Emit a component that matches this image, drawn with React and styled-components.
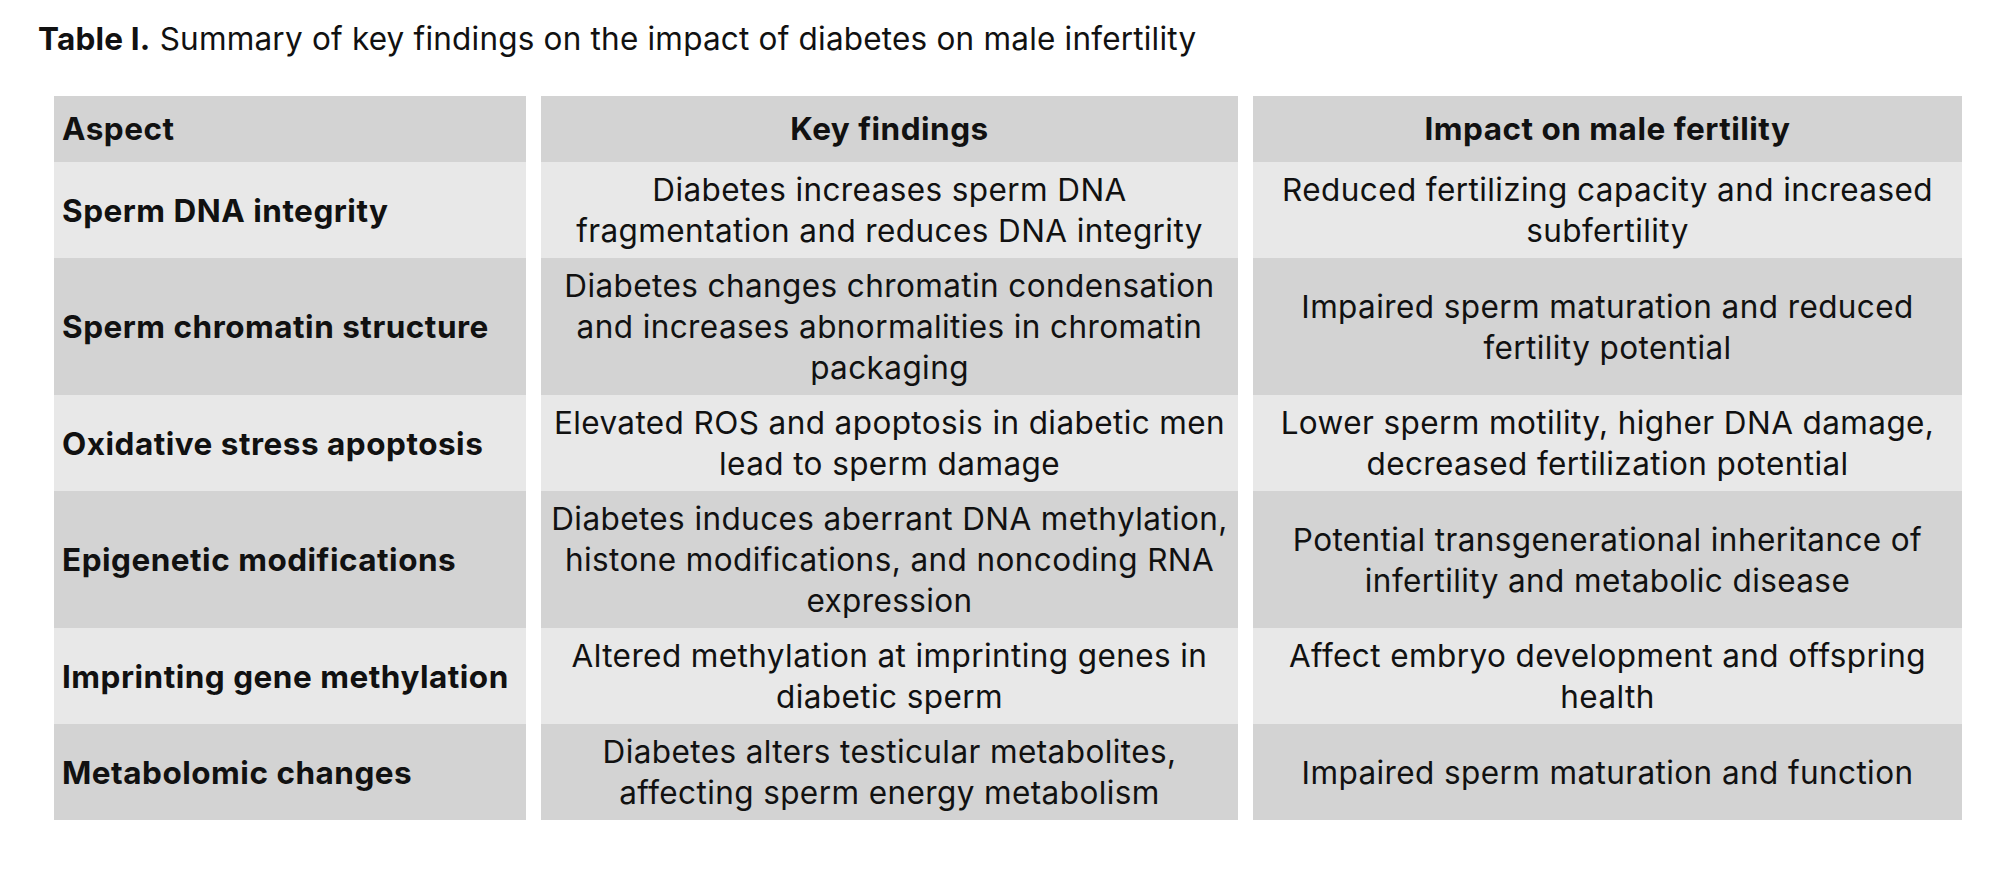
import React from 'react';
import styled, { createGlobalStyle } from 'styled-components';

const GlobalStyle = createGlobalStyle`
  html, body {
    margin: 0;
    padding: 0;
    background: #ffffff;
  }
  body {
    font-family: Inter, Lato, "Liberation Sans", sans-serif;
    color: #111111;
  }
`;

const Page = styled.div`
  width: 2000px;
  height: 879px;
  padding: 21px 0 0 38px;
  box-sizing: border-box;
`;

const Caption = styled.div`
  font-size: 31.5px;
  line-height: 36px;
  letter-spacing: 0.2px;
  color: #111111;
  margin-bottom: 39px;

  b {
    font-weight: 700;
  }
`;

const Table = styled.div`
  display: grid;
  grid-template-columns: 472px 697px 709px;
  column-gap: 15px;
  margin-left: 16px;
`;

const Cell = styled.div`
  display: flex;
  align-items: center;
  justify-content: ${({ $left }) => ($left ? 'flex-start' : 'center')};
  text-align: ${({ $left }) => ($left ? 'left' : 'center')};
  background: ${({ $shade }) => ($shade ? '#d3d3d3' : '#e8e8e8')};
  padding: ${({ $head }) => ($head ? '12px 8px 13px' : '7px 8px')};
  font-size: 31.5px;
  line-height: 41px;
  letter-spacing: ${({ $bold }) => ($bold ? '0.5px' : '0.4px')};
  font-weight: ${({ $bold }) => ($bold ? 700 : 400)};
  box-sizing: border-box;
`;

const rows = [
  [
    'Sperm DNA integrity',
    'Diabetes increases sperm DNA fragmentation and reduces DNA integrity',
    'Reduced fertilizing capacity and increased subfertility'
  ],
  [
    'Sperm chromatin structure',
    'Diabetes changes chromatin condensation and increases abnormalities in chromatin packaging',
    'Impaired sperm maturation and reduced fertility potential'
  ],
  [
    'Oxidative stress apoptosis',
    'Elevated ROS and apoptosis in diabetic men lead to sperm damage',
    'Lower sperm motility, higher DNA damage, decreased fertilization potential'
  ],
  [
    'Epigenetic modifications',
    'Diabetes induces aberrant DNA methylation, histone modifications, and noncoding RNA expression',
    'Potential transgenerational inheritance of infertility and metabolic disease'
  ],
  [
    'Imprinting gene methylation',
    'Altered methylation at imprinting genes in diabetic sperm',
    'Affect embryo development and offspring health'
  ],
  [
    'Metabolomic changes',
    'Diabetes alters testicular metabolites, affecting sperm energy metabolism',
    'Impaired sperm maturation and function'
  ]
];

export default function App() {
  return (
    <Page>
      <GlobalStyle />
      <Caption>
        <b>Table I.</b> Summary of key findings on the impact of diabetes on male infertility
      </Caption>
      <Table>
        <Cell $head $shade $bold $left>Aspect</Cell>
        <Cell $head $shade $bold>Key findings</Cell>
        <Cell $head $shade $bold>Impact on male fertility</Cell>
        {rows.map((row, i) => {
          const shade = i % 2 === 1;
          return (
            <React.Fragment key={row[0]}>
              <Cell $shade={shade} $bold $left>{row[0]}</Cell>
              <Cell $shade={shade}>{row[1]}</Cell>
              <Cell $shade={shade}>{row[2]}</Cell>
            </React.Fragment>
          );
        })}
      </Table>
    </Page>
  );
}
